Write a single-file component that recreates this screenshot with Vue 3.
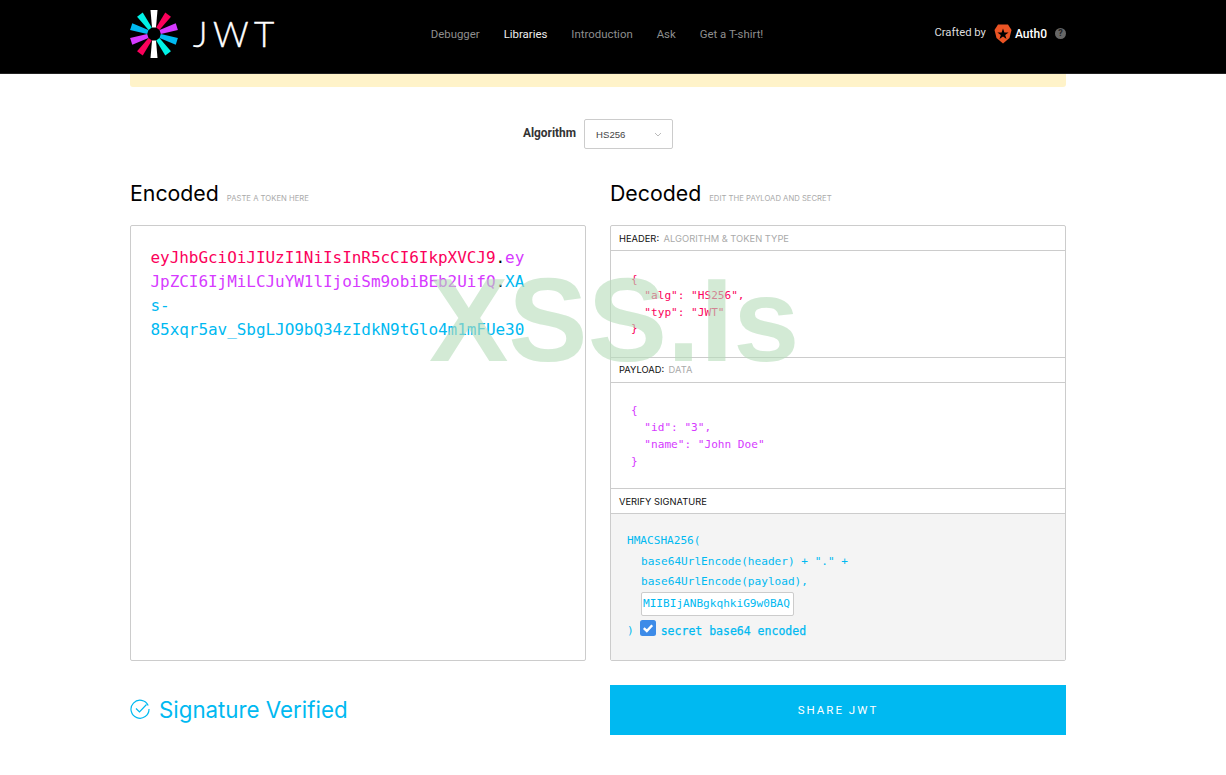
<script setup>
const rays = [
  { a: 0, c: '#ffffff' }, { a: 36, c: '#fb015b' }, { a: 72, c: '#d63aff' }, { a: 108, c: '#00b9f1' }, { a: 144, c: '#00f2e6' },
  { a: 180, c: '#ffffff' }, { a: 216, c: '#fb015b' }, { a: 252, c: '#d63aff' }, { a: 288, c: '#00b9f1' }, { a: 324, c: '#00f2e6' }
]
const nav = [
  { t: 'Debugger' }, { t: 'Libraries', on: true }, { t: 'Introduction' }, { t: 'Ask' }, { t: 'Get a T-shirt!' }
]
</script>

<template>
  <div class="page">
    <header class="top">
      <div class="top-inner">
        <div class="logo">
          <svg width="48" height="48" viewBox="-24 -24 48 48">
            <polygon v-for="r in rays" :key="r.a" points="-3.5,-24 3.5,-24 2,-6.5 -2,-6.5" :fill="r.c" :transform="`rotate(${r.a})`" />
          </svg>
          <span class="wordmark">JWT</span>
        </div>
        <nav class="nav">
          <a v-for="n in nav" :key="n.t" :class="{ on: n.on }">{{ n.t }}</a>
        </nav>
        <div class="crafted">
          <span class="by">Crafted by</span>
          <svg class="shield" width="18" height="20" viewBox="0 0 18 20">
            <path d="M4 0.5 H14 L17.5 6 L15.5 14 L9 19.5 L2.5 14 L0.5 6 Z" fill="#eb5424" />
            <polygon points="9,4.5 10.4,8.6 14.6,8.6 11.2,11.1 12.5,15 9,12.6 5.5,15 6.8,11.1 3.4,8.6 7.6,8.6" fill="#000" />
          </svg>
          <span class="auth0">Auth0</span>
          <span class="help">?</span>
        </div>
      </div>
    </header>

    <div class="wrap">
      <div class="notice"></div>

      <div class="algo">
        <span class="algo-label">Algorithm</span>
        <div class="select">
          <span>HS256</span>
          <svg width="8" height="5" viewBox="0 0 8 5"><path d="M1 1 L4 4 L7 1" fill="none" stroke="#bbb" stroke-width="1" /></svg>
        </div>
      </div>

      <div class="cols">
        <section class="col">
          <div class="title"><h2>Encoded</h2><small>PASTE A TOKEN HERE</small></div>
          <div class="box encoded">
            <div class="token"><span class="red">eyJhbGciOiJIUzI1NiIsInR5cCI6IkpXVCJ9</span><span class="dot">.</span><span class="pur">ey<br />JpZCI6IjMiLCJuYW1lIjoiSm9obiBEb2UifQ</span><span class="dot">.</span><span class="blu">XA<br />s-<br />85xqr5av_SbgLJO9bQ34zIdkN9tGlo4m1mFUe30</span></div>
          </div>
          <div class="verified">
            <svg width="20" height="20" viewBox="0 0 20 20">
              <path d="M18.2 6.5 A9 9 0 1 0 19 10" fill="none" stroke="#00b9f1" stroke-width="1.2" />
              <path d="M6 9.5 L9.5 13 L16.5 5.5" fill="none" stroke="#00b9f1" stroke-width="1.2" />
            </svg>
            <span>Signature Verified</span>
          </div>
        </section>

        <section class="col">
          <div class="title"><h2>Decoded</h2><small>EDIT THE PAYLOAD AND SECRET</small></div>
          <div class="box decoded">
            <div class="lab">HEADER:<em>ALGORITHM &amp; TOKEN TYPE</em></div>
            <pre class="json red h1">{
  "alg": "HS256",
  "typ": "JWT"
}</pre>
            <div class="lab up">PAYLOAD:<em>DATA</em></div>
            <pre class="json pur h2">{
  "id": "3",
  "name": "John Doe"
}</pre>
            <div class="lab">VERIFY SIGNATURE</div>
            <div class="sig">
              <div class="sl">HMACSHA256(</div>
              <div class="sl in">base64UrlEncode(header) + "." +</div>
              <div class="sl in">base64UrlEncode(payload),</div>
              <div class="secret-row"><div class="secret">MIIBIjANBgkqhkiG9w0BAQ</div></div>
              <div class="chk-row">
                <span>)</span>
                <svg width="16" height="16" viewBox="0 0 16 16">
                  <rect width="16" height="16" rx="2.5" fill="#3d8be8" />
                  <path d="M3.8 8.2 L6.8 11 L12.2 5.2" fill="none" stroke="#fff" stroke-width="2.4" />
                </svg>
                <b>secret base64 encoded</b>
              </div>
            </div>
          </div>
          <button class="share">SHARE JWT</button>
        </section>
      </div>
    </div>

    <div class="mark">XSS.Is</div>
  </div>
</template>

<style scoped>
.page { position: relative; width: 1226px; height: 775px; overflow: hidden; background: #fff; font-family: Roboto, sans-serif; }
.top { height: 73px; background: #000; border-bottom: 1px solid #222; }
.top-inner { width: 936px; margin-left: 130px; height: 67px; display: flex; align-items: center; }
.logo { display: flex; align-items: center; width: 301px; }
.wordmark { margin-left: 15px; color: #fff; font-family: Lato, sans-serif; font-weight: 300; font-size: 35px; letter-spacing: 5.4px; line-height: 1; -webkit-text-stroke: 0.4px #fff; }
.nav { display: flex; gap: 24px; font-size: 11.4px; color: #8e8e8e; width: 504px; }
.nav .on { color: #eee; }
.crafted { display: flex; align-items: center; color: #ddd; font-size: 11.3px; white-space: nowrap; }
.by { margin-top: -2px; }
.shield { margin-left: 8px; }
.auth0 { margin-left: 3px; color: #fff; font-weight: 500; font-size: 12px; }
.help { margin-left: 8px; width: 11px; height: 11px; border-radius: 50%; background: #666; color: #222; font-size: 9px; font-weight: 700; line-height: 11px; text-align: center; }

.wrap { width: 936px; margin-left: 130px; }
.notice { height: 13px; background: #fff3c9; border-radius: 0 0 3px 3px; }
.algo { display: flex; align-items: center; justify-content: center; gap: 8px; margin-top: 32px; height: 30px; }
.algo-label { font-size: 11.9px; font-weight: 700; color: #333; margin-top: -2px; }
.select { width: 89px; height: 30px; box-sizing: border-box; border: 1px solid #ccc; border-radius: 2px; padding: 0 10px 0 11px; display: flex; align-items: center; justify-content: space-between; font-size: 9.6px; color: #444; font-family: "Liberation Sans", sans-serif; }

.cols { display: flex; gap: 24px; margin-top: 29px; }
.col { width: 456px; }
.title { display: flex; align-items: baseline; height: 47px; }
.title h2 { margin: 0; font-family: Inter, sans-serif; font-weight: 400; font-size: 21.3px; line-height: 31px; color: #000; }
.title small { margin-left: 8px; font-size: 7.7px; color: #aaa; font-family: Inter, sans-serif; }
.box { box-sizing: border-box; width: 456px; height: 436px; border: 1px solid #ccc; border-radius: 2px; }
.encoded { padding: 20px 19.5px; }
.token { font-family: "DejaVu Sans Mono", monospace; font-size: 16px; line-height: 24px; color: #000; white-space: nowrap; letter-spacing: -0.05px; }
.red { color: #fb015b; }
.pur { color: #d63aff; }
.blu { color: #00b9f1; }
.dot { color: #000; }
.verified { display: flex; align-items: center; gap: 9px; margin-top: 33px; height: 30px; color: #00b9f1; font-family: Inter, sans-serif; font-size: 22.3px; }
.lab { box-sizing: border-box; height: 25px; border-bottom: 1px solid #ccc; padding: 0 8px; display: flex; align-items: center; font-size: 9.35px; color: #111; font-family: Inter, sans-serif; }
.lab.up { padding-bottom: 2px; }
.lab em { font-style: normal; color: #aaa; margin-left: 4.5px; }
.json { margin: 0; box-sizing: border-box; font-family: "DejaVu Sans Mono", monospace; font-size: 11.1px; }
.h1 { height: 107px; padding: 21px 20px 0; line-height: 16.4px; border-bottom: 1px solid #ccc; }
.h2 { height: 106px; padding: 19px 20px 0; line-height: 17px; border-bottom: 1px solid #ccc; }
.sig { box-sizing: border-box; height: 146px; background: #f4f4f4; padding: 17px 16px 0; color: #00b9f1; font-family: "DejaVu Sans Mono", monospace; font-size: 11.1px; }
.sl { height: 20.5px; line-height: 20.5px; }
.in { padding-left: 14px; }
.secret-row { padding-left: 14px; margin-top: -1px; }
.secret { box-sizing: border-box; width: 153px; height: 24px; padding-left: 1px; line-height: 22px; background: #fff; border: 1px solid #ccc; border-radius: 2px; white-space: nowrap; overflow: hidden; }
.chk-row { display: flex; align-items: center; margin-top: 5px; height: 20px; }
.chk-row svg { margin-left: 6px; margin-top: -6px; }
.chk-row b { margin-left: 5px; font-weight: 400; font-size: 11.5px; -webkit-text-stroke: 0.25px #00b9f1; }
.share { display: block; margin-top: 24px; width: 456px; height: 50px; border: 0; background: #00b9f1; color: #fff; font-family: Roboto, sans-serif; font-size: 11.5px; letter-spacing: 2px; font-weight: 400; }
.mark { position: absolute; left: 429px; top: 252px; font-family: "Liberation Sans", sans-serif; font-weight: 700; font-size: 119px; line-height: 136px; color: rgba(182, 220, 185, 0.6); pointer-events: none; white-space: nowrap; }
</style>
